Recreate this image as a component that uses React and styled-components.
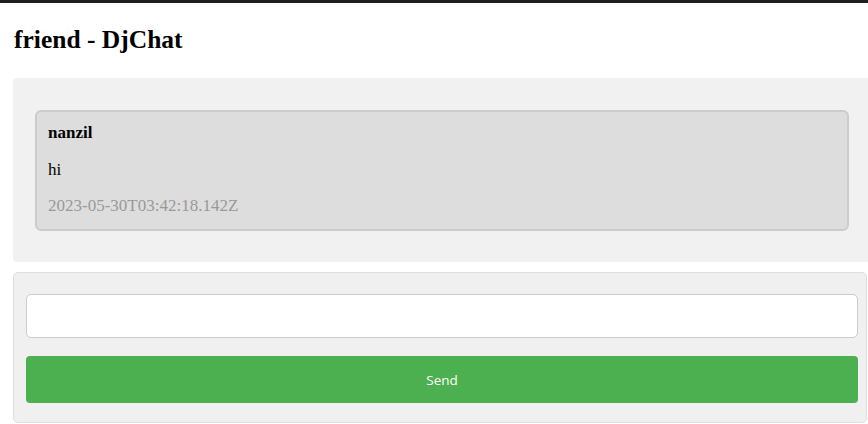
import React from "react";
import styled, { createGlobalStyle } from "styled-components";

const GlobalStyle = createGlobalStyle`
  html, body {
    margin: 0;
    padding: 0;
    background: #fff;
  }
  body {
    font-family: "Liberation Serif", "Times New Roman", serif;
    color: #000;
    overflow: hidden;
  }
`;

const TopBar = styled.div`
  height: 3px;
  background: #1f1f1f;
`;

const Page = styled.div`
  padding-left: 13px;
`;

const Title = styled.h2`
  font-size: 25.5px;
  font-weight: bold;
  margin: 22px 0 24px 1px;
  line-height: 1.15;
`;

const ChatBox = styled.div`
  box-sizing: border-box;
  height: 184px;
  background: #f1f1f1;
  border-radius: 4px 0 0 4px;
  padding: 32px 19px 32px 22px;
`;

const Message = styled.div`
  display: flex;
  flex-direction: column;
  gap: 17px;
  background: #dddddd;
  border: 2px solid #cccccc;
  border-radius: 6px;
  padding: 11px 11px 13px;
  font-size: 17px;
  line-height: 1.15;
`;

const Author = styled.strong`
  font-weight: bold;
`;

const Line = styled.span`
  color: ${({ $muted }) => ($muted ? "#999999" : "#000")};
`;

const Composer = styled.form`
  box-sizing: border-box;
  width: 854px;
  height: 151px;
  margin-top: 10px;
  background: #f0f0f0;
  border: 1px solid #dddddd;
  border-radius: 5px;
  padding: 21px 8px 19px 12px;
  display: flex;
  flex-direction: column;
  gap: 18px;
`;

const Input = styled.input`
  box-sizing: border-box;
  height: 44px;
  width: 100%;
  background: #fff;
  border: 1px solid #cccccc;
  border-radius: 5px;
  outline: none;
`;

const SendButton = styled.button`
  box-sizing: border-box;
  height: 47px;
  width: 100%;
  background: #4caf50;
  color: #fff;
  border: none;
  border-radius: 4px;
  font-family: "Open Sans", "Noto Sans", sans-serif;
  font-size: 13.5px;
`;

export default function App() {
  return (
    <>
      <GlobalStyle />
      <TopBar />
      <Page>
        <Title>friend - DjChat</Title>
        <ChatBox>
          <Message>
            <Author>nanzil</Author>
            <Line>hi</Line>
            <Line $muted>2023-05-30T03:42:18.142Z</Line>
          </Message>
        </ChatBox>
        <Composer onSubmit={(e) => e.preventDefault()}>
          <Input type="text" />
          <SendButton type="submit">Send</SendButton>
        </Composer>
      </Page>
    </>
  );
}
